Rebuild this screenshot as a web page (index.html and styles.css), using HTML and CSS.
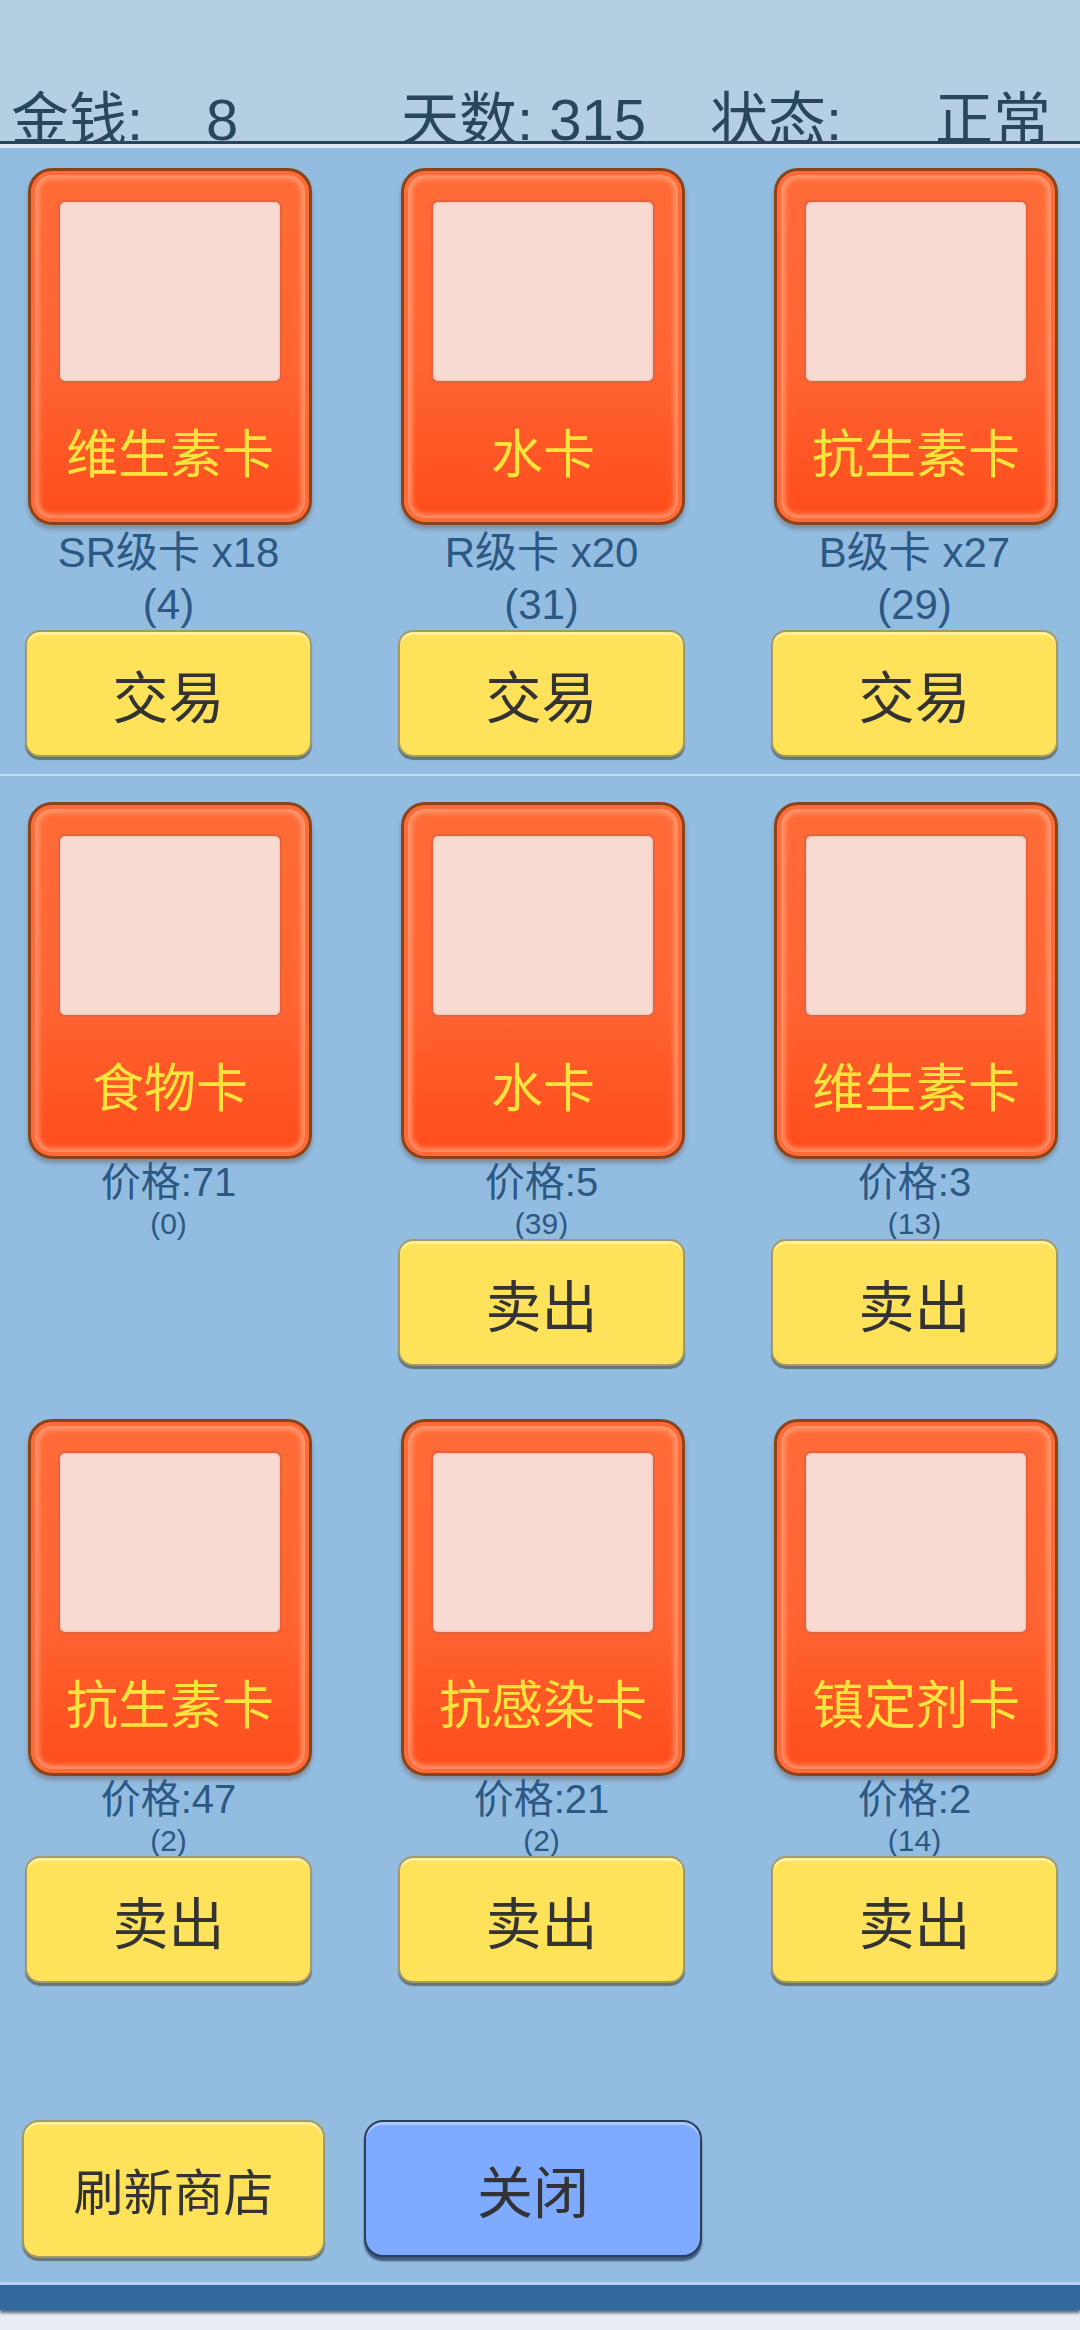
FILE: index.html
```html
<!DOCTYPE html>
<html lang="zh-CN">
<head>
<meta charset="utf-8">
<title>商店</title>
<link rel="stylesheet" href="styles.css">
</head>
<body>
<div class="screen">
  <header class="topbar">
    <span class="stat">金钱:</span>
    <span class="stat">8</span>
    <span class="stat">天数: 315</span>
    <span class="stat">状态:</span>
    <span class="stat">正常</span>
  </header>
  <div class="strip"></div>
  <main class="panel">
    <section class="row">
      <div class="cell cell-own">
        <div class="card"><div class="card-pic"></div><div class="card-name">维生素卡</div></div>
        <div class="own-info"><div>SR级卡 x18</div><div>(4)</div></div>
        <button class="btn btn-yellow">交易</button>
      </div>
      <div class="cell cell-own">
        <div class="card"><div class="card-pic"></div><div class="card-name">水卡</div></div>
        <div class="own-info"><div>R级卡 x20</div><div>(31)</div></div>
        <button class="btn btn-yellow">交易</button>
      </div>
      <div class="cell cell-own">
        <div class="card"><div class="card-pic"></div><div class="card-name">抗生素卡</div></div>
        <div class="own-info"><div>B级卡 x27</div><div>(29)</div></div>
        <button class="btn btn-yellow">交易</button>
      </div>
    </section>
    <div class="divider"></div>
    <section class="row row-shop">
      <div class="cell">
        <div class="card"><div class="card-pic"></div><div class="card-name">食物卡</div></div>
        <div class="shop-info"><div class="price">价格:71</div><div class="stock">(0)</div></div>
        <div class="btn-slot"></div>
      </div>
      <div class="cell">
        <div class="card"><div class="card-pic"></div><div class="card-name">水卡</div></div>
        <div class="shop-info"><div class="price">价格:5</div><div class="stock">(39)</div></div>
        <button class="btn btn-yellow">卖出</button>
      </div>
      <div class="cell">
        <div class="card"><div class="card-pic"></div><div class="card-name">维生素卡</div></div>
        <div class="shop-info"><div class="price">价格:3</div><div class="stock">(13)</div></div>
        <button class="btn btn-yellow">卖出</button>
      </div>
    </section>
    <section class="row row-shop row-last">
      <div class="cell">
        <div class="card"><div class="card-pic"></div><div class="card-name">抗生素卡</div></div>
        <div class="shop-info"><div class="price">价格:47</div><div class="stock">(2)</div></div>
        <button class="btn btn-yellow">卖出</button>
      </div>
      <div class="cell">
        <div class="card"><div class="card-pic"></div><div class="card-name">抗感染卡</div></div>
        <div class="shop-info"><div class="price">价格:21</div><div class="stock">(2)</div></div>
        <button class="btn btn-yellow">卖出</button>
      </div>
      <div class="cell">
        <div class="card"><div class="card-pic"></div><div class="card-name">镇定剂卡</div></div>
        <div class="shop-info"><div class="price">价格:2</div><div class="stock">(14)</div></div>
        <button class="btn btn-yellow">卖出</button>
      </div>
    </section>
    <div class="actions">
      <button class="btn btn-yellow btn-refresh">刷新商店</button>
      <button class="btn btn-blue">关闭</button>
    </div>
  </main>
  <footer class="bottombar"><div class="bar"></div></footer>
</div>
</body>
</html>
```
FILE: styles.css
```css
html, body {
  margin: 0;
  padding: 0;
}
body {
  width: 1080px;
  height: 2330px;
  overflow: hidden;
  background: #e9eef4;
  font-family: "Liberation Sans", "Noto Sans CJK SC", sans-serif;
}
.screen {
  width: 1080px;
  height: 2330px;
  display: flex;
  flex-direction: column;
}
.topbar {
  height: 141px;
  box-sizing: border-box;
  padding: 91px 0 0 11px;
  background: #b4cfe2;
  border-bottom: 3px solid #2b4458;
  overflow: hidden;
  display: grid;
  grid-template-columns: 195px 195px 309px 225px auto;
  font-size: 58px;
  line-height: 58px;
  color: #29475b;
  white-space: nowrap;
  flex: none;
  height: 144px;
}
.strip {
  height: 4px;
  background: #dce9f5;
  flex: none;
}
.panel {
  flex: none;
  height: 2134px;
  box-sizing: border-box;
  background: #93bce1;
  padding-top: 20px;
  display: flex;
  flex-direction: column;
}
.row {
  display: grid;
  grid-template-columns: 287px 287px 287px;
  column-gap: 86px;
  padding-left: 25px;
}
.row-last {
  margin-top: 53px;
}
.cell {
  display: flex;
  flex-direction: column;
}
.card {
  width: 284px;
  height: 357px;
  margin-left: 3px;
  box-sizing: border-box;
  border: 3px solid #8a4418;
  border-radius: 24px;
  background: linear-gradient(180deg, #ff6c38 0%, #ff6432 55%, #ff4c1c 100%);
  box-shadow: inset 0 0 0 4px #ff6a38, inset 0 0 5px 8px rgba(255, 168, 128, 0.75), 0 4px 4px rgba(70, 35, 10, 0.3);
  padding: 29px 27px 0;
  display: flex;
  flex-direction: column;
}
.card-pic {
  height: 183px;
  flex: none;
  box-sizing: border-box;
  border: 2px solid #e4623e;
  border-radius: 7px;
  background: #f7dbd2;
  box-shadow: inset 0 0 3px rgba(200, 90, 60, 0.35);
}
.card-name {
  flex: 1;
  display: flex;
  align-items: center;
  justify-content: center;
  font-family: "Noto Sans CJK SC", sans-serif;
  font-size: 52px;
  line-height: 1;
  color: #fde33e;
  padding-bottom: 3px;
  white-space: nowrap;
}
.own-info {
  height: 105px;
  box-sizing: border-box;
  padding-top: 2px;
  font-size: 42px;
  line-height: 52px;
  color: #2c5884;
  text-align: center;
  white-space: nowrap;
}
.shop-info {
  height: 80px;
  color: #2c5884;
  text-align: center;
  white-space: nowrap;
}
.price {
  font-size: 40px;
  line-height: 46px;
}
.stock {
  font-size: 30px;
  line-height: 34px;
  padding-top: 2px;
}
.btn {
  display: flex;
  align-items: center;
  justify-content: center;
  box-sizing: border-box;
  padding: 0;
  margin: 0;
  font-family: "Noto Sans CJK SC", sans-serif;
  color: #333333;
  cursor: pointer;
}
.btn-slot,
.cell .btn {
  height: 127px;
  width: 287px;
}
.btn-yellow {
  background: #fde25a;
  border: 2px solid #a39a6a;
  border-radius: 15px;
  box-shadow: inset 0 3px 0 #fff09a, 0 3px 1px rgba(70, 70, 50, 0.6);
  font-size: 56px;
}
.divider {
  height: 2px;
  margin: 17px 0 26px;
  background: #c6dbef;
}
.actions {
  margin-top: 137px;
  padding-left: 22px;
  display: flex;
  align-items: flex-start;
  column-gap: 39px;
}
.btn-refresh {
  width: 303px;
  height: 138px;
  border-radius: 17px;
  font-size: 50px;
}
.btn-blue {
  width: 338px;
  height: 137px;
  background: #7eaaff;
  border: 2px solid #2a3f5e;
  border-radius: 19px;
  box-shadow: inset 0 3px 0 rgba(255, 255, 255, 0.35), 0 4px 2px rgba(25, 45, 75, 0.7);
  font-size: 56px;
}
.bottombar {
  flex: none;
  height: 48px;
  box-sizing: border-box;
  border-top: 3px solid #b9d5ee;
}
.bar {
  height: 25px;
  background: #336a9e;
  box-shadow: 0 3px 3px rgba(20, 45, 70, 0.7);
}
```
